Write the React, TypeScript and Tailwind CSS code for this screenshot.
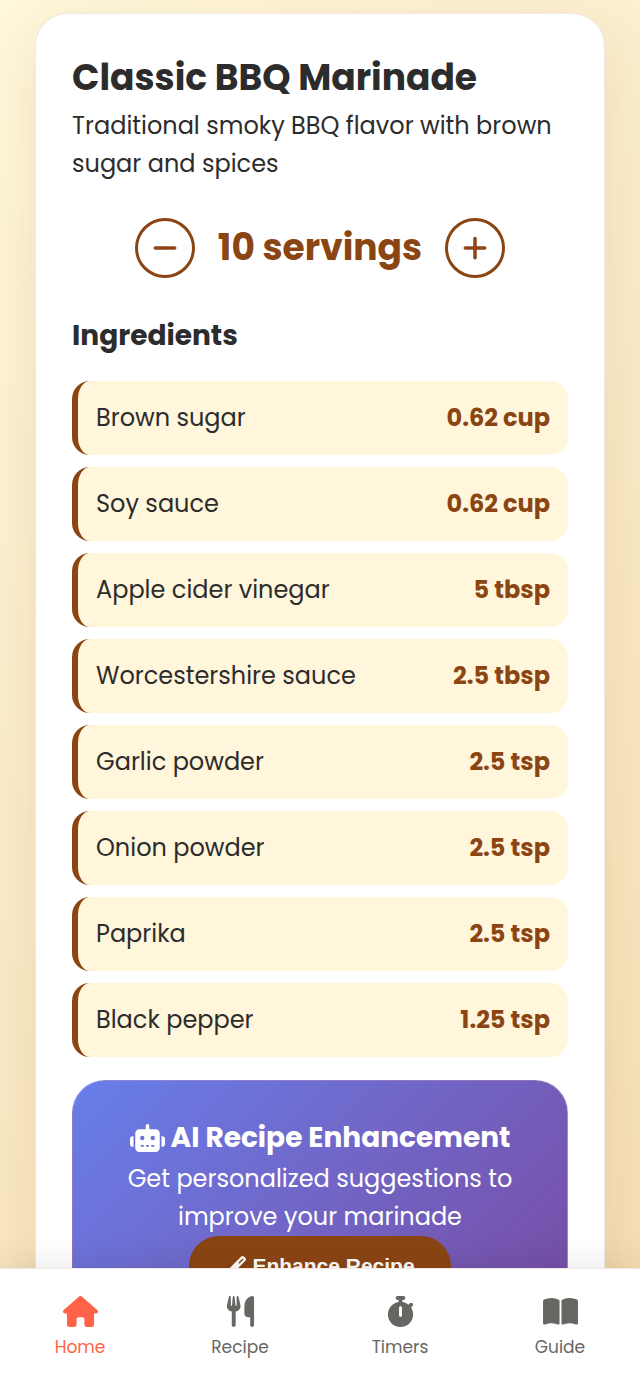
import { useState } from 'react';
import { FaBookOpen, FaHouse, FaMinus, FaPlus, FaRobot, FaStopwatch, FaUtensils, FaWandMagic } from 'react-icons/fa6';

const baseServings = 10;

const ingredients = [
  { name: 'Brown sugar', amount: 0.62, unit: 'cup' },
  { name: 'Soy sauce', amount: 0.62, unit: 'cup' },
  { name: 'Apple cider vinegar', amount: 5, unit: 'tbsp' },
  { name: 'Worcestershire sauce', amount: 2.5, unit: 'tbsp' },
  { name: 'Garlic powder', amount: 2.5, unit: 'tsp' },
  { name: 'Onion powder', amount: 2.5, unit: 'tsp' },
  { name: 'Paprika', amount: 2.5, unit: 'tsp' },
  { name: 'Black pepper', amount: 1.25, unit: 'tsp' },
];

const tabs = [
  { label: 'Home', Icon: FaHouse, active: true },
  { label: 'Recipe', Icon: FaUtensils, active: false },
  { label: 'Timers', Icon: FaStopwatch, active: false },
  { label: 'Guide', Icon: FaBookOpen, active: false },
];

function scale(amount: number, servings: number) {
  return Number(((amount * servings) / baseServings).toFixed(2));
}

function ServingsControl({ servings, onChange }: { servings: number; onChange: (n: number) => void }) {
  const button =
    'flex size-[60px] items-center justify-center rounded-full border-3 border-[#8b4513] bg-white text-[28px]';
  return (
    <div className="mt-[35px] flex items-center justify-center gap-[23px] text-[#8b4513]">
      <button type="button" aria-label="Fewer servings" className={button} onClick={() => onChange(Math.max(1, servings - 1))}>
        <FaMinus />
      </button>
      <span className="text-[36px] leading-[60px] font-bold">{servings} servings</span>
      <button type="button" aria-label="More servings" className={button} onClick={() => onChange(servings + 1)}>
        <FaPlus />
      </button>
    </div>
  );
}

export default function App() {
  const [servings, setServings] = useState(baseServings);

  return (
    <div className="flex h-screen flex-col bg-linear-135 from-[#fff8dc] to-[#f5deb3] font-['Poppins','Inter',sans-serif] text-[#2c2c2c]">
      <main className="min-h-0 flex-1 overflow-y-auto px-[35px] pt-[13px] [scrollbar-width:none]">
        <article className="rounded-[33px] border border-[#efe7e8] bg-white px-9 pt-10 pb-9 shadow-[0_16px_64px_rgba(139,69,19,0.12)]">
          <h1 className="text-[36px] leading-[48px] font-bold">Classic BBQ Marinade</h1>
          <p className="mt-[5px] text-[24px] leading-[38px]">Traditional smoky BBQ flavor with brown sugar and spices</p>

          <ServingsControl servings={servings} onChange={setServings} />

          <h2 className="mt-9 text-[28px] leading-[44px] font-bold">Ingredients</h2>
          <ul className="mt-[23px] flex flex-col gap-3">
            {ingredients.map((item) => (
              <li
                key={item.name}
                className="flex items-center justify-between rounded-[18px] border-l-6 border-[#8b4513] bg-[#fff6db] p-[18px] text-[24px] leading-[38px]"
              >
                <span>{item.name}</span>
                <strong className="font-bold text-[#8b4513]">
                  {scale(item.amount, servings)} {item.unit}
                </strong>
              </li>
            ))}
          </ul>

          <section className="mt-[23px] rounded-[33px] border border-white/20 bg-linear-135 from-[#667eea] to-[#764ba2] px-9 pt-[35px] pb-9 text-center text-white">
            <h2 className="flex items-center justify-center gap-[6px] text-[28px] leading-[44px] font-bold">
              <FaRobot className="h-[28px] w-[35px]" />
              AI Recipe Enhancement
            </h2>
            <p className="text-[24px] leading-[38px]">Get personalized suggestions to improve your marinade</p>
            <button
              type="button"
              className="inline-flex h-[60px] items-center gap-[6px] rounded-full bg-[#8b4513] px-9 font-['Liberation_Sans',sans-serif] text-[21px] font-bold"
            >
              <FaWandMagic />
              Enhance Recipe
            </button>
          </section>
        </article>
      </main>

      <nav
        aria-label="Main"
        className="relative grid grid-cols-4 border-t border-[#f5e8e0] bg-white pt-[27px] pb-7 shadow-[0_-6px_30px_rgba(0,0,0,0.08)]"
      >
        {tabs.map(({ label, Icon, active }) => (
          <a
            key={label}
            href={'#' + label.toLowerCase()}
            aria-current={active ? 'page' : undefined}
            className={active ? 'flex flex-col items-center gap-2 text-[#ff6347]' : 'flex flex-col items-center gap-2 text-[#666663]'}
          >
            <Icon className="h-[31px] w-[35px]" />
            <span className="text-[17px] leading-6">{label}</span>
          </a>
        ))}
      </nav>
    </div>
  );
}
